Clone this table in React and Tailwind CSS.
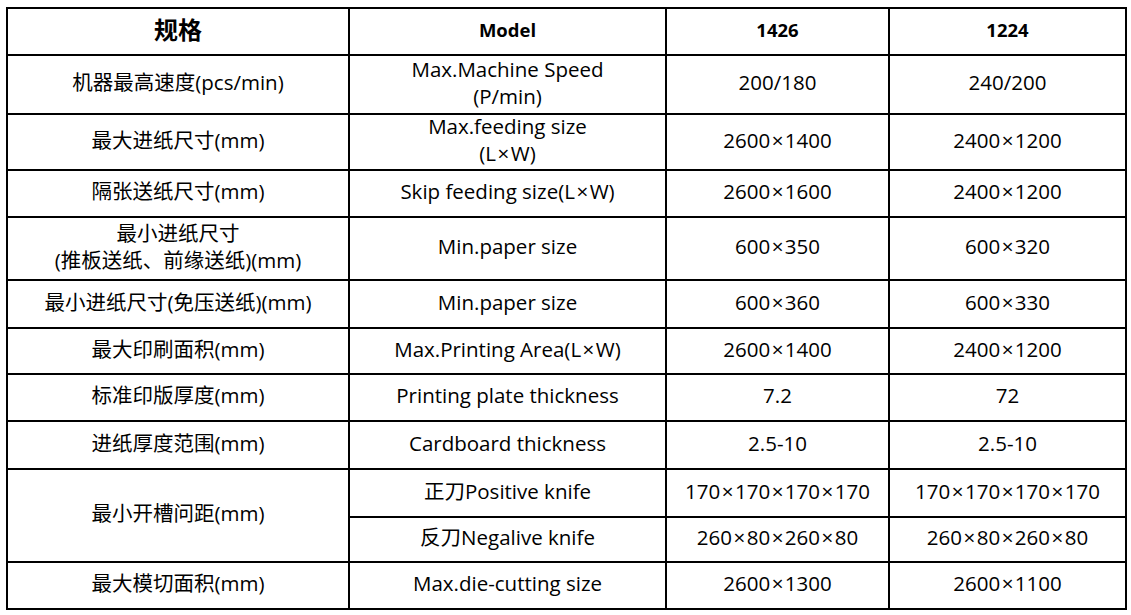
const rows = [
  { h: 'h-[59px]', spec: '机器最高速度(pcs/min)', model: ['Max.Machine Speed', '(P/min)'], a: '200/180', b: '240/200' },
  { h: 'h-[56px]', spec: '最大进纸尺寸(mm)', model: ['Max.feeding size', '(L×W)'], a: '2600×1400', b: '2400×1200' },
  { h: 'h-[47px]', spec: '隔张送纸尺寸(mm)', model: ['Skip feeding size(L×W)'], a: '2600×1600', b: '2400×1200' },
  { h: 'h-[63px]', spec: ['最小进纸尺寸', '(推板送纸、前缘送纸)(mm)'], model: ['Min.paper size'], a: '600×350', b: '600×320' },
  { h: 'h-[48px]', spec: '最小进纸尺寸(免压送纸)(mm)', model: ['Min.paper size'], a: '600×360', b: '600×330' },
  { h: 'h-[46px]', spec: '最大印刷面积(mm)', model: ['Max.Printing Area(L×W)'], a: '2600×1400', b: '2400×1200' },
  { h: 'h-[47px]', spec: '标准印版厚度(mm)', model: ['Printing plate thickness'], a: '7.2', b: '72' },
  { h: 'h-[48px]', spec: '进纸厚度范围(mm)', model: ['Cardboard thickness'], a: '2.5-10', b: '2.5-10' },
];

const cell = 'border-2 border-black text-center align-middle p-0 leading-[27px]';

// the multiplication sign sits wider in the original font
function T({ s }) {
  const parts = s.split('×');
  return parts.map((p, i) => (
    <span key={i}>
      {i > 0 && <span className="mx-[1.5px]">×</span>}
      {p}
    </span>
  ));
}

function C({ v, className = '' }) {
  const arr = Array.isArray(v) ? v : [v];
  return (
    <td className={`${cell} ${className}`}>
      <div className="-translate-y-[2px]">
        {arr.map((t, i) => <div key={i}><T s={t} /></div>)}
      </div>
    </td>
  );
}

export default function App() {
  return (
    <div className="w-[1131px] h-[615px] bg-white pl-[6px] pt-[7px]" style={{ fontFamily: '"Open Sans", "Noto Sans CJK SC", sans-serif' }}>
      <table className="border-collapse table-fixed w-[1119px] text-[20.5px] text-black">
        <colgroup>
          <col className="w-[342px]" />
          <col className="w-[317px]" />
          <col className="w-[223px]" />
          <col className="w-[237px]" />
        </colgroup>
        <tbody>
          <tr className="h-[47px]">
            <C v="规格" className="text-[24px] font-bold" />
            <C v="Model" className="text-[18.5px] font-bold" />
            <C v="1426" className="text-[18.5px] font-bold" />
            <C v="1224" className="text-[18.5px] font-bold" />
          </tr>
          {rows.map(r => (
            <tr key={r.a + r.spec} className={r.h}>
              <C v={r.spec} />
              <C v={r.model} />
              <C v={r.a} />
              <C v={r.b} />
            </tr>
          ))}
          <tr className="h-[48px]">
            <td rowSpan={2} className={cell}>
              <div className="-translate-y-[2px]">最小开槽问距(mm)</div>
            </td>
            <C v="正刀Positive knife" />
            <C v="170×170×170×170" />
            <C v="170×170×170×170" />
          </tr>
          <tr className="h-[45px]">
            <C v="反刀Negalive knife" />
            <C v="260×80×260×80" />
            <C v="260×80×260×80" />
          </tr>
          <tr className="h-[47px]">
            <C v="最大模切面积(mm)" />
            <C v="Max.die-cutting size" />
            <C v="2600×1300" />
            <C v="2600×1100" />
          </tr>
        </tbody>
      </table>
    </div>
  );
}
